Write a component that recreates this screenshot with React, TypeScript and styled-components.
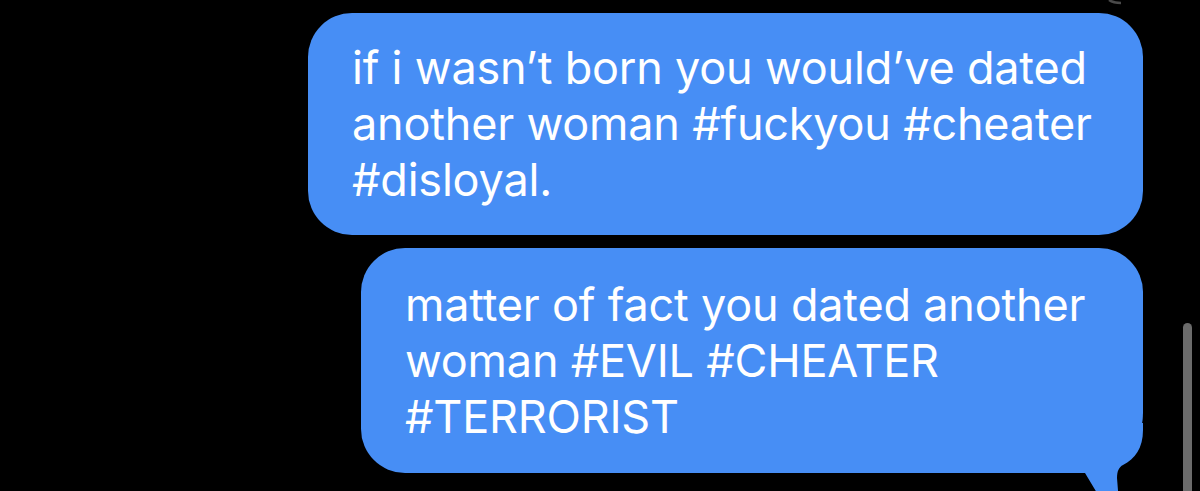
import React from "react";
import styled, { createGlobalStyle } from "styled-components";

const Global = createGlobalStyle`
  html, body {
    margin: 0;
    padding: 0;
    background: #000;
    overflow: hidden;
    height: 491px;
  }
  #root { height: 491px; }
`;

const Screen = styled.div`
  position: relative;
  width: 1200px;
  height: 491px;
  background: #000;
  overflow: hidden;
  display: flex;
  flex-direction: column;
  align-items: flex-end;
  gap: 13px;
  padding: 13px 57px 0 0;
  box-sizing: border-box;
`;

const Bubble = styled.div<{ $w: number; $tail?: boolean }>`
  position: relative;
  width: ${(p) => p.$w}px;
  box-sizing: border-box;
  padding: ${(p) => (p.$tail ? "29px 20px 28px 44px" : "27px 20px 27px 44px")};
  background: #478ef5;
  color: #fff;
  font-family: Inter, "Noto Sans", sans-serif;
  font-size: 45px;
  line-height: 56px;
  letter-spacing: -0.2px;
  white-space: nowrap;
  border-radius: 44px;
  border-bottom-right-radius: ${(p) => (p.$tail ? "60px" : "44px")};
`;

const Tail = styled.svg`
  position: absolute;
  right: 0;
  bottom: -30px;
  width: 70px;
  height: 80px;
  display: block;
`;

const TopMark = styled.svg`
  position: absolute;
  top: 0;
  left: 1106px;
  width: 20px;
  height: 6px;
`;

const ScrollThumb = styled.div`
  position: absolute;
  left: 1183px;
  top: 323px;
  width: 9px;
  height: 200px;
  border-radius: 5px;
  background: #6b6b6b;
`;

export default function App() {
  return (
    <>
      <Global />
      <Screen>
        <TopMark viewBox="0 0 20 6">
          <path d="M3 0 C6 2 10 3 15 3" stroke="#4a4a4a" strokeWidth="2.5" fill="none" />
        </TopMark>
        <Bubble $w={835}>
          if i wasn’t born you would’ve dated
          <br />
          another woman #fuckyou #cheater
          <br />
          #disloyal.
        </Bubble>
        <Bubble $w={782} $tail>
          matter of fact you dated another
          <br />
          woman #EVIL #CHEATER
          <br />
          #TERRORIST
          <Tail viewBox="0 0 70 80">
            <path
              d="M70 0 L70 7 C70 25 62 36 50 42 C46 44 44 48 44 55 L46 80 L30 80 L12 50 L0 50 L0 0 Z"
              fill="#478ef5"
            />
          </Tail>
        </Bubble>
        <ScrollThumb />
      </Screen>
    </>
  );
}
